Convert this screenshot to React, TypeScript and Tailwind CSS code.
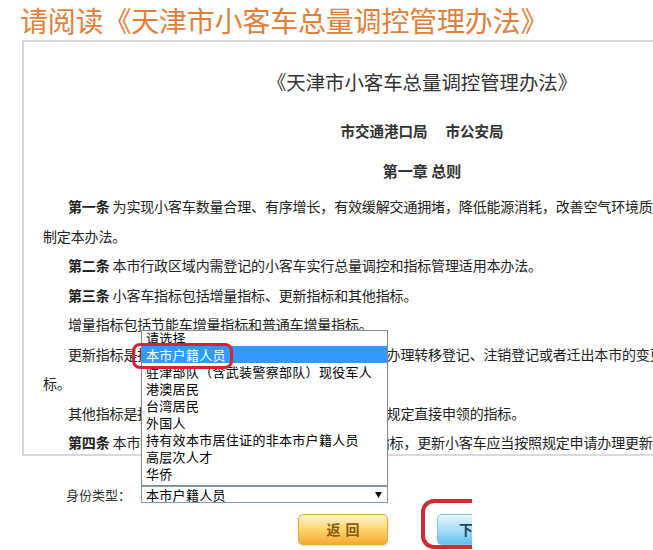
export default function App() {
  const options = [
    "请选择",
    "本市户籍人员",
    "驻津部队（含武装警察部队）现役军人",
    "港澳居民",
    "台湾居民",
    "外国人",
    "持有效本市居住证的非本市户籍人员",
    "高层次人才",
    "华侨",
  ];

  return (
    <div className="w-[653px] h-[550px] overflow-hidden bg-white font-['Noto_Sans_CJK_SC',sans-serif] text-[#333]">
      {/* page title */}
      <div className="h-[40px] pl-[20px] flex items-center text-[28px] leading-none tracking-[-0.2px] text-[#e2803a] whitespace-nowrap">
        请阅读《天津市小客车总量调控管理办法》
      </div>

      {/* document box */}
      <div className="ml-[22px] w-[800px] h-[416px] border-2 border-[#dadada] overflow-hidden px-[19px]">
        <div className="mt-[28px] text-center text-[19.4px] leading-[24px] whitespace-nowrap">
          《天津市小客车总量调控管理办法》
        </div>
        <div className="mt-[27px] flex justify-center gap-[18px] text-[14.5px] leading-[20px] font-bold">
          <span>市交通港口局</span>
          <span>市公安局</span>
        </div>
        <div className="mt-[20px] text-center text-[15px] leading-[20px] font-bold">第一章 总则</div>

        <div className="mt-[11px] text-[14px] leading-[29.5px] tracking-[-0.15px] whitespace-nowrap text-[#222]">
          <p className="pl-[25px]">
            <b>第一条</b> 为实现小客车数量合理、有序增长，有效缓解交通拥堵，降低能源消耗，改善空气环境质量，结合本市实际，
          </p>
          <p>制定本办法。</p>
          <p className="pl-[25px]">
            <b>第二条</b> 本市行政区域内需登记的小客车实行总量调控和指标管理适用本办法。
          </p>
          <p className="pl-[25px]">
            <b>第三条</b> 小客车指标包括增量指标、更新指标和其他指标。
          </p>
          <p className="pl-[25px]">增量指标包括节能车增量指标和普通车增量指标。</p>
          <p className="pl-[25px]">
            更新指标是指本市号牌小客车因报废、被盗抢或者需办理转移登记、注销登记或者迁出本市的变更登记后取得的指
          </p>
          <p>标。</p>
          <p className="pl-[25px]">
            其他指标是指除增量指标和更新指标外，依照本办法规定直接申领的指标。
          </p>
          <p className="pl-[25px]">
            <b>第四条</b> 本市新增小客车应当按照规定申请取得增量指标，更新小客车应当按照规定申请办理更新指标。
          </p>
        </div>
      </div>

      {/* identity type select */}
      <div className="mt-[30px] pl-[66px] flex items-center h-[17px]">
        <span className="text-[13px] leading-none text-[#333] whitespace-nowrap">身份类型：</span>
        <div className="relative ml-[10px] w-[247px] h-[17px]">
          <div className="absolute left-0 bottom-full w-[247px] h-[156px] border border-[#8a8a8a] bg-white">
            <div className="h-full overflow-hidden">
              <div className="-mt-[2px]">
                {options.map((o, i) => (
                  <div
                    key={o}
                    className={
                      i === 1
                        ? "h-[17px] leading-[17px] pl-[4px] text-[13px] tracking-[0.3px] whitespace-nowrap bg-[#3399ff] text-white"
                        : "h-[17px] leading-[17px] pl-[4px] text-[13px] tracking-[0.3px] whitespace-nowrap text-black"
                    }
                  >
                    {o}
                  </div>
                ))}
              </div>
            </div>
            {/* red annotation */}
            <div className="absolute left-[-10px] top-[12px] w-[101px] h-[26px] border-[3px] border-[#d32436] rounded-[8px]" />
          </div>
          <div className="h-[17px] border border-[#7f9db9] bg-white flex items-center justify-between pl-[4px] pr-[5px]">
            <span className="text-[13px] leading-none text-black tracking-[0.3px]">本市户籍人员</span>
            <svg width="7" height="6" viewBox="0 0 7 6">
              <path d="M0 0h7L3.5 6z" fill="#111" />
            </svg>
          </div>
        </div>
      </div>

      {/* buttons */}
      <div className="-mt-[4px] pl-[298px] flex items-start">
        <button className="mt-[15px] w-[90px] h-[31px] rounded-[5px] border border-[#e6a940] bg-linear-to-b from-[#fff4c8] via-[#fdd56c] to-[#f5ab2c] text-[14px] font-bold text-[#8b5a14] tracking-[5px] pl-[5px] shadow-[0_1px_2px_rgba(0,0,0,0.15)]">
          返回
        </button>
        <div className="ml-[33px] w-[51px] h-[50px] border-[4px] border-r-0 border-[#d22a35] rounded-l-[13px]">
          <div className="mt-[11px] ml-[12px] h-[31px] overflow-hidden rounded-l-[5px] border border-r-0 border-[#86c3e0] bg-linear-to-b from-[#e8f9ff] to-[#5fc2ee]">
            <span className="block pl-[21px] leading-[29px] text-[14px] font-bold text-[#1f4a66] whitespace-nowrap tracking-[5px]">
              下一步
            </span>
          </div>
        </div>
      </div>
    </div>
  );
}
